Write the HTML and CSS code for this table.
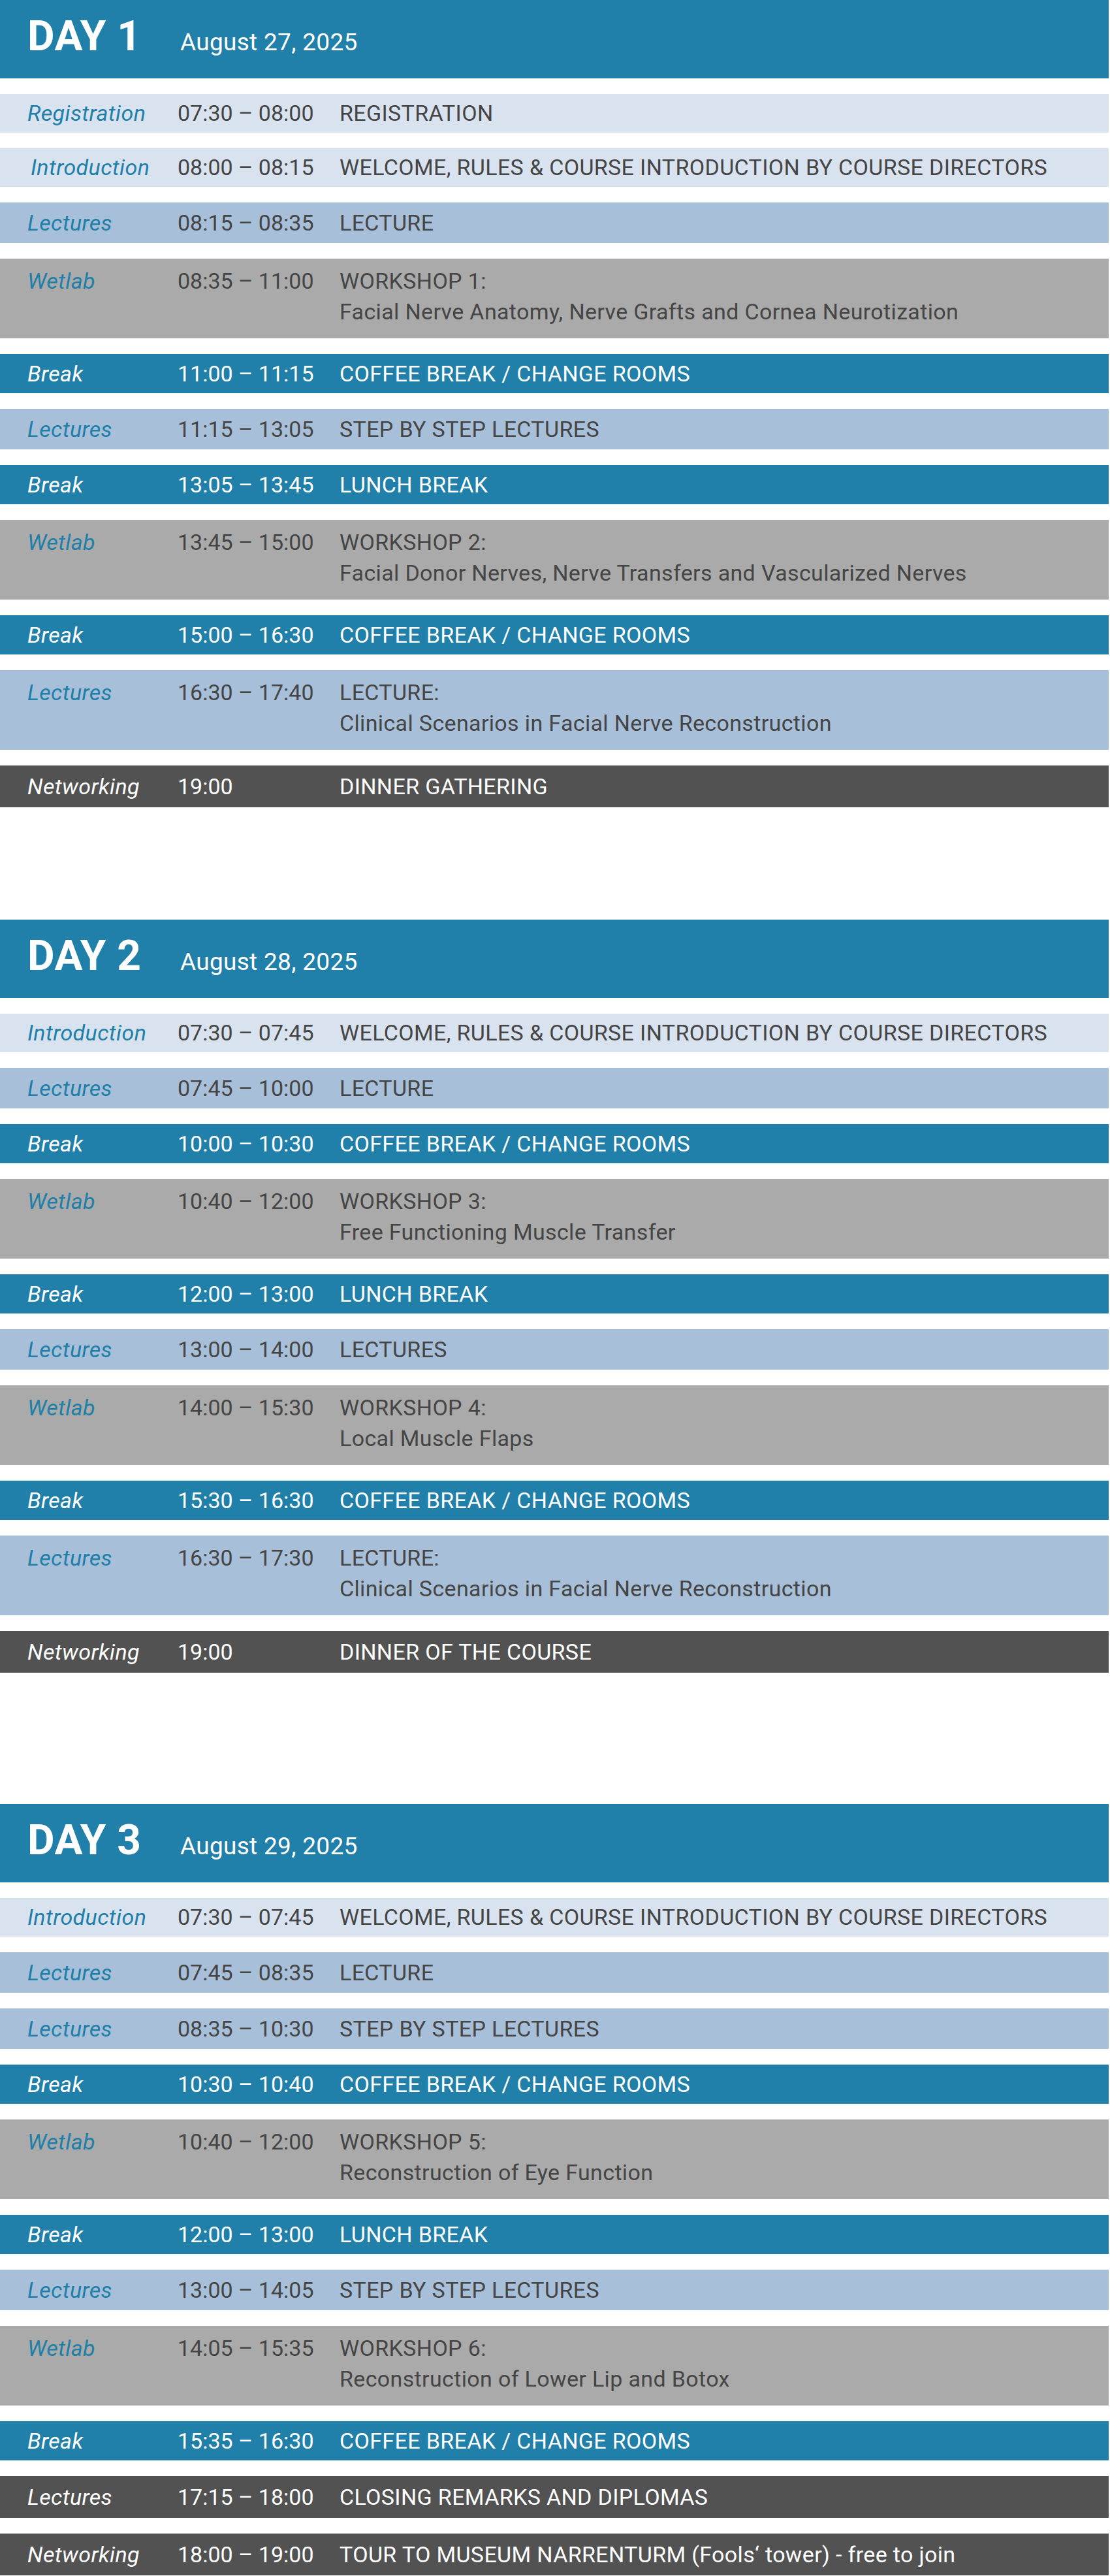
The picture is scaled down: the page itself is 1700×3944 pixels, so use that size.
FILE: index.html
```html
<!DOCTYPE html>
<html lang="en">
<head>
<meta charset="utf-8">
<title>Course Programme</title>
<link rel="stylesheet" href="styles.css">
</head>
<body>
<main class="programme">

  <section class="day">
    <header class="day-head">
      <h2 class="day-num">DAY 1</h2>
      <span class="day-date">August 27, 2025</span>
    </header>
    <div class="row row--pale"><span class="label">Registration</span><span class="time">07:30 – 08:00</span><span class="act">REGISTRATION</span></div>
    <div class="row row--pale"><span class="label label--shift">Introduction</span><span class="time">08:00 – 08:15</span><span class="act">WELCOME, RULES &amp; COURSE INTRODUCTION BY COURSE DIRECTORS</span></div>
    <div class="row row--lecture"><span class="label">Lectures</span><span class="time">08:15 – 08:35</span><span class="act">LECTURE</span></div>
    <div class="row row--wetlab row--double"><span class="label">Wetlab</span><span class="time">08:35 – 11:00</span><span class="act">WORKSHOP 1:<br>Facial Nerve Anatomy, Nerve Grafts and Cornea Neurotization</span></div>
    <div class="row row--break"><span class="label">Break</span><span class="time">11:00 – 11:15</span><span class="act">COFFEE BREAK / CHANGE ROOMS</span></div>
    <div class="row row--lecture"><span class="label">Lectures</span><span class="time">11:15 – 13:05</span><span class="act">STEP BY STEP LECTURES</span></div>
    <div class="row row--break"><span class="label">Break</span><span class="time">13:05 – 13:45</span><span class="act">LUNCH BREAK</span></div>
    <div class="row row--wetlab row--double"><span class="label">Wetlab</span><span class="time">13:45 – 15:00</span><span class="act">WORKSHOP 2:<br>Facial Donor Nerves, Nerve Transfers and Vascularized Nerves</span></div>
    <div class="row row--break"><span class="label">Break</span><span class="time">15:00 – 16:30</span><span class="act">COFFEE BREAK / CHANGE ROOMS</span></div>
    <div class="row row--lecture row--double"><span class="label">Lectures</span><span class="time">16:30 – 17:40</span><span class="act">LECTURE:<br>Clinical Scenarios in Facial Nerve Reconstruction</span></div>
    <div class="row row--dark"><span class="label">Networking</span><span class="time">19:00</span><span class="act">DINNER GATHERING</span></div>
  </section>

  <section class="day day--second">
    <header class="day-head">
      <h2 class="day-num">DAY 2</h2>
      <span class="day-date">August 28, 2025</span>
    </header>
    <div class="row row--pale"><span class="label">Introduction</span><span class="time">07:30 – 07:45</span><span class="act">WELCOME, RULES &amp; COURSE INTRODUCTION BY COURSE DIRECTORS</span></div>
    <div class="row row--lecture"><span class="label">Lectures</span><span class="time">07:45 – 10:00</span><span class="act">LECTURE</span></div>
    <div class="row row--break"><span class="label">Break</span><span class="time">10:00 – 10:30</span><span class="act">COFFEE BREAK / CHANGE ROOMS</span></div>
    <div class="row row--wetlab row--double"><span class="label">Wetlab</span><span class="time">10:40 – 12:00</span><span class="act">WORKSHOP 3:<br>Free Functioning Muscle Transfer</span></div>
    <div class="row row--break"><span class="label">Break</span><span class="time">12:00 – 13:00</span><span class="act">LUNCH BREAK</span></div>
    <div class="row row--lecture"><span class="label">Lectures</span><span class="time">13:00 – 14:00</span><span class="act">LECTURES</span></div>
    <div class="row row--wetlab row--double"><span class="label">Wetlab</span><span class="time">14:00 – 15:30</span><span class="act">WORKSHOP 4:<br>Local Muscle Flaps</span></div>
    <div class="row row--break"><span class="label">Break</span><span class="time">15:30 – 16:30</span><span class="act">COFFEE BREAK / CHANGE ROOMS</span></div>
    <div class="row row--lecture row--double"><span class="label">Lectures</span><span class="time">16:30 – 17:30</span><span class="act">LECTURE:<br>Clinical Scenarios in Facial Nerve Reconstruction</span></div>
    <div class="row row--dark"><span class="label">Networking</span><span class="time">19:00</span><span class="act">DINNER OF THE COURSE</span></div>
  </section>

  <section class="day day--third">
    <header class="day-head">
      <h2 class="day-num">DAY 3</h2>
      <span class="day-date">August 29, 2025</span>
    </header>
    <div class="row row--pale"><span class="label">Introduction</span><span class="time">07:30 – 07:45</span><span class="act">WELCOME, RULES &amp; COURSE INTRODUCTION BY COURSE DIRECTORS</span></div>
    <div class="row row--lecture"><span class="label">Lectures</span><span class="time">07:45 – 08:35</span><span class="act">LECTURE</span></div>
    <div class="row row--lecture"><span class="label">Lectures</span><span class="time">08:35 – 10:30</span><span class="act">STEP BY STEP LECTURES</span></div>
    <div class="row row--break"><span class="label">Break</span><span class="time">10:30 – 10:40</span><span class="act">COFFEE BREAK / CHANGE ROOMS</span></div>
    <div class="row row--wetlab row--double"><span class="label">Wetlab</span><span class="time">10:40 – 12:00</span><span class="act">WORKSHOP 5:<br>Reconstruction of Eye Function</span></div>
    <div class="row row--break"><span class="label">Break</span><span class="time">12:00 – 13:00</span><span class="act">LUNCH BREAK</span></div>
    <div class="row row--lecture"><span class="label">Lectures</span><span class="time">13:00 – 14:05</span><span class="act">STEP BY STEP LECTURES</span></div>
    <div class="row row--wetlab row--double"><span class="label">Wetlab</span><span class="time">14:05 – 15:35</span><span class="act">WORKSHOP 6:<br>Reconstruction of Lower Lip and Botox</span></div>
    <div class="row row--break"><span class="label">Break</span><span class="time">15:35 – 16:30</span><span class="act">COFFEE BREAK / CHANGE ROOMS</span></div>
    <div class="row row--dark"><span class="label">Lectures</span><span class="time">17:15 – 18:00</span><span class="act">CLOSING REMARKS AND DIPLOMAS</span></div>
    <div class="row row--dark"><span class="label">Networking</span><span class="time">18:00 – 19:00</span><span class="act">TOUR TO MUSEUM NARRENTURM (Fools‘ tower) - free to join</span></div>
  </section>

</main>
</body>
</html>
```

FILE: styles.css
```css
* {
  box-sizing: border-box;
}

html, body {
  margin: 0;
  padding: 0;
  background: #ffffff;
}

body {
  font-family: Roboto, "Noto Sans", "Liberation Sans", sans-serif;
  color: #454545;
}

.programme {
  width: 1698px;
  display: flex;
  flex-direction: column;
}

.day {
  display: flex;
  flex-direction: column;
  gap: 24px;
}

.day--second {
  margin-top: 172px;
}

.day--third {
  margin-top: 201px;
}

.day-head {
  height: 120px;
  background: #2080aa;
  color: #ffffff;
  display: flex;
  align-items: baseline;
  padding: 24px 0 0 42px;
}

.day-num {
  margin: 0;
  width: 234px;
  font-size: 64px;
  line-height: 64px;
  font-weight: 700;
  letter-spacing: 0.5px;
}

.day-date {
  font-size: 37px;
  line-height: 64px;
  font-weight: 400;
  letter-spacing: 0.3px;
}

.row {
  display: grid;
  grid-template-columns: 230px 248px 1fr;
  align-items: center;
  padding-left: 42px;
  font-size: 34px;
  line-height: 47px;
  color: #454545;
}

.label {
  font-style: italic;
  color: #1f7fa9;
  letter-spacing: 0.4px;
}

.label--shift {
  padding-left: 5px;
}

.time,
.act {
  white-space: nowrap;
}

.act {
  letter-spacing: 0.35px;
}

.row--pale {
  height: 59px;
  background: #d9e3ef;
}

.row--lecture {
  height: 62px;
  background: #a7bfd8;
}

.row--break {
  height: 60px;
  background: #2080aa;
  color: #ffffff;
}

.row--break .label {
  color: #ffffff;
}

.row--wetlab {
  background: #aaaaaa;
}

.row--double {
  height: 122px;
  align-items: start;
  padding-top: 11px;
}

.row--dark {
  height: 64px;
  background: #525252;
  color: #ffffff;
}

.row--dark .label {
  color: #ffffff;
}
```
